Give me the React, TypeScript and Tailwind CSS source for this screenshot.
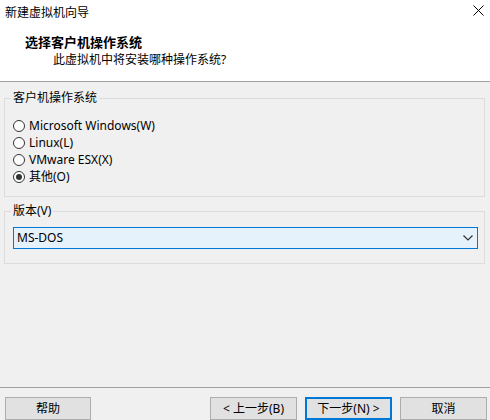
import React from "react";

const FONT = { fontFamily: '"Noto Sans", "Noto Sans CJK SC", sans-serif' };

function Radio({ label, checked }: { label: string; checked?: boolean }) {
  return (
    <div className="flex h-[17px] items-center gap-[4px]">
      <span className="flex h-[12px] w-[12px] items-center justify-center rounded-full border border-[#333333] bg-white">
        {checked && <span className="h-[6px] w-[6px] rounded-full bg-[#333333]" />}
      </span>
      <span className="text-[12px] leading-[16px] text-black">{label}</span>
    </div>
  );
}

function Btn({ children, primary, w }: { children: React.ReactNode; primary?: boolean; w: string }) {
  return (
    <div
      className={
        "flex h-[23px] items-center justify-center bg-[#e1e1e1] text-[12px] leading-[16px] text-black " +
        w +
        (primary ? " border-2 border-[#0078d7]" : " border border-[#adadad]")
      }
    >
      {children}
    </div>
  );
}

export default function App() {
  return (
    <div className="flex h-[420px] w-[490px] flex-col overflow-hidden bg-[#f0f0f0] text-black" style={FONT}>
      <div className="h-[82px] shrink-0 border-b border-[#a0a0a0] bg-white">
        <div className="flex h-[26px] items-start justify-between pl-[5px] pr-[6px]">
          <span className="mt-[5px] text-[12px] leading-[16px]">新建虚拟机向导</span>
          <svg className="mt-[5px]" width="11" height="11" viewBox="0 0 11 11">
            <path d="M0.5 0.5 L10.5 10.5 M10.5 0.5 L0.5 10.5" stroke="#000" strokeWidth="1" fill="none" />
          </svg>
        </div>
        <div className="mt-[8px] pl-[25px] text-[13px] font-bold leading-[16px]">选择客户机操作系统</div>
        <div className="mt-[2px] pl-[53px] text-[12px] leading-[16px]">此虚拟机中将安装哪种操作系统?</div>
      </div>

      <div className="flex flex-1 flex-col pl-[4px] pr-[5px]">
        <div className="relative mt-[16px] h-[99px] border border-[#dcdcdc]">
          <span className="absolute left-[6px] top-[-9px] bg-[#f0f0f0] px-[2px] text-[12px] leading-[16px]">
            客户机操作系统
          </span>
          <div className="flex flex-col pl-[8px] pt-[18px]">
            <Radio label="Microsoft Windows(W)" />
            <Radio label="Linux(L)" />
            <Radio label="VMware ESX(X)" />
            <Radio label="其他(O)" checked />
          </div>
        </div>

        <div className="relative mt-[14px] h-[53px] border border-[#dcdcdc]">
          <span className="absolute left-[6px] top-[-9px] bg-[#f0f0f0] px-[2px] text-[12px] leading-[16px]">
            版本(V)
          </span>
          <div className="ml-[8px] mr-[6px] mt-[15px] flex h-[22px] items-center justify-between border border-[#0078d7] bg-[#e5f1fb] pl-[3px] pr-[4px]">
            <span className="text-[12px] leading-[16px]">MS-DOS</span>
            <svg width="10" height="6" viewBox="0 0 10 6">
              <path d="M0.5 0.5 L5 5 L9.5 0.5" stroke="#333" strokeWidth="1.2" fill="none" />
            </svg>
          </div>
        </div>
      </div>

      <div className="h-[33px] shrink-0 border-t border-[#a0a0a0]">
        <div className="mt-[9px] flex items-start pl-[5px] pr-[3px]">
          <Btn w="w-[86px]">帮助</Btn>
          <div className="flex-1" />
          <div className="flex gap-[8px]">
            <Btn w="w-[87px]">&lt; 上一步(B)</Btn>
            <Btn w="w-[87px]" primary>
              下一步(N) &gt;
            </Btn>
            <Btn w="w-[87px]">取消</Btn>
          </div>
        </div>
      </div>
    </div>
  );
}
